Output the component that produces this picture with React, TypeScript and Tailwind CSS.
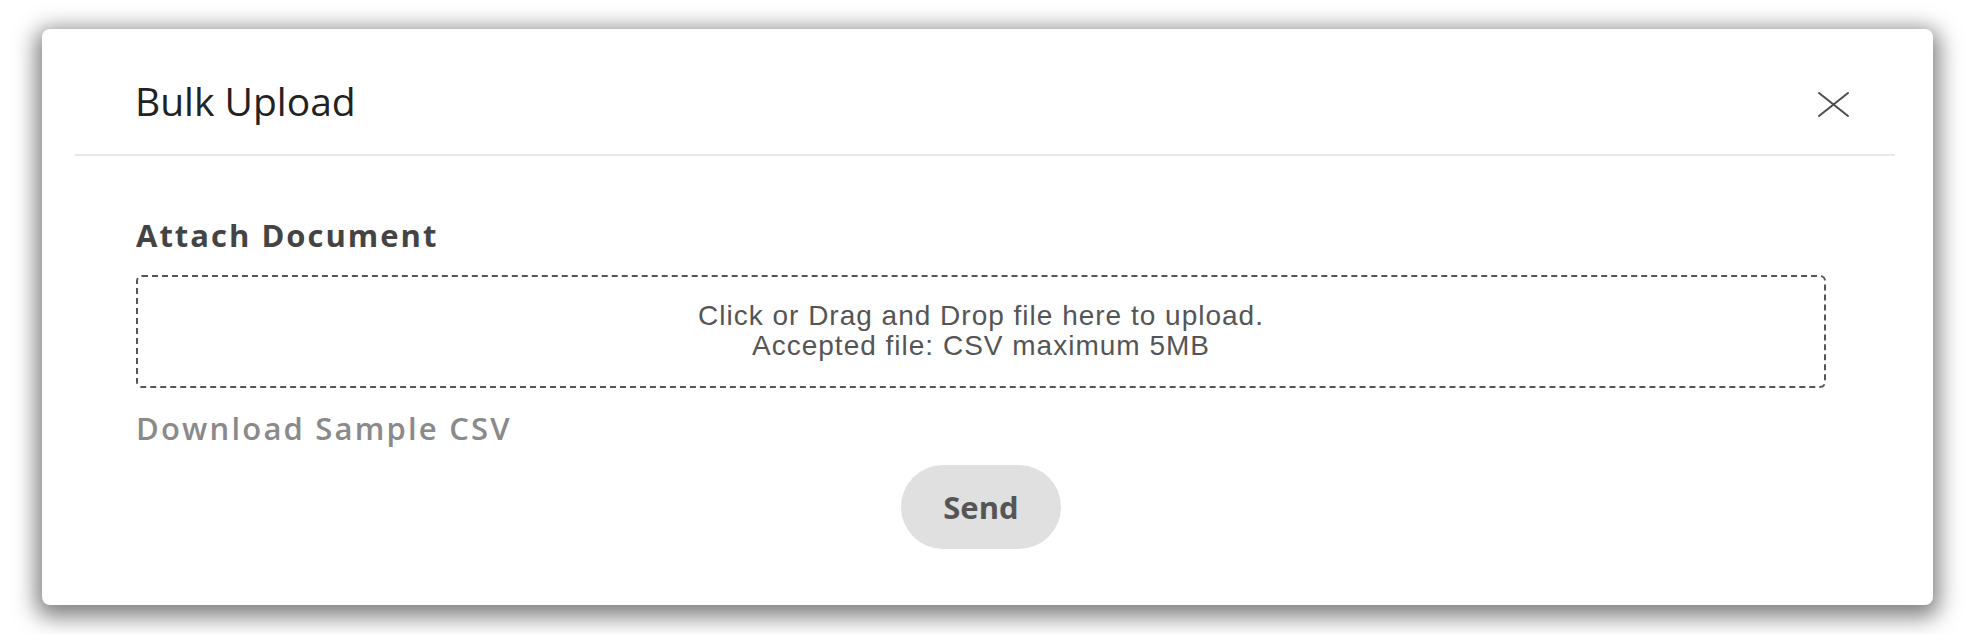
import React from "react";

const CloseIcon: React.FC = () => (
  <svg width="31" height="25" viewBox="0 0 31 25" fill="none">
    <path d="M1 1L30 24M30 1L1 24" stroke="#4d4d4d" strokeWidth="2" strokeLinecap="round" />
  </svg>
);

export default function App() {
  return (
    <div className="h-[634px] w-[1976px] overflow-hidden bg-white pl-[42px] pt-[29px]">
      <div className="flex h-[576px] w-[1891px] flex-col rounded-lg bg-white shadow-[0_6px_22px_6px_rgba(0,0,0,0.5)]">
        {/* header */}
        <div className="ml-[33px] mr-[38px] flex h-[127px] items-start justify-between border-b-2 border-[#e8e8e8] pl-[60px] pr-[46px] pt-[52px]">
          <h2 className="font-['Open_Sans',sans-serif] text-[39px] leading-none text-[#222]">Bulk Upload</h2>
          <button className="mt-[11px]" aria-label="Close">
            <CloseIcon />
          </button>
        </div>

        {/* body */}
        <div className="flex flex-col pl-[94px] pr-[107px] pt-[64px] font-['Open_Sans',sans-serif]">
          <label className="text-[31px] font-bold leading-none tracking-[2px] text-[#444]">Attach Document</label>
          <div className="mt-[24px] rounded-md border-2 border-dashed border-[#555] pb-[25px] pt-[24px] text-center font-['Liberation_Sans',Arial,sans-serif] text-[28px] leading-[30px] tracking-[1px] text-[#555]">
            <p>Click or Drag and Drop file here to upload.</p>
            <p>Accepted file: CSV maximum 5MB</p>
          </div>
          <a className="mt-[25px] text-[31px] font-semibold leading-none tracking-[2.2px] text-[#8a8a8a]">Download Sample CSV</a>
          <div className="mt-[21px] flex justify-center">
            <button className="h-[84px] w-[160px] rounded-full bg-[#e0e0e0] text-[31px] font-bold text-[#555]">Send</button>
          </div>
        </div>
      </div>
    </div>
  );
}
